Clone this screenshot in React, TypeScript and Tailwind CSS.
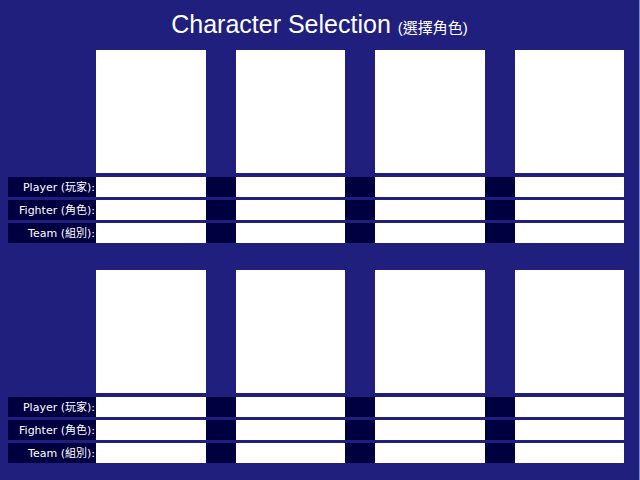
import React from 'react';

const slots = [0, 1, 2, 3];

const rows = [
  { label: 'Player', zh: '(玩家)' },
  { label: 'Fighter', zh: '(角色)' },
  { label: 'Team', zh: '(組別)' },
];

const font = { fontFamily: '"Liberation Sans", "Noto Sans CJK TC", sans-serif' };
const labelFont = { fontFamily: '"DejaVu Sans", "Noto Sans CJK TC", sans-serif' };

// one block of four character slots plus its form rows
const SelectionGroup: React.FC = () => (
  <div className="flex flex-col">
    <div className="ml-[96px] w-[528px] grid grid-cols-4 gap-x-[30px]">
      {slots.map(i => (
        <div key={i} className="h-[123px] bg-white" />
      ))}
    </div>

    <div className="mt-[4px] flex flex-col gap-[3px]">
      {rows.map(r => (
        <div key={r.label} className="ml-[8px] w-[616px] h-[20px] flex bg-[#000040]">
          <div
            className="w-[88px] shrink-0 flex items-center justify-end pt-[2px] pr-[1px] text-[11px] text-white whitespace-nowrap"
            style={labelFont}
          >
            {r.label} {r.zh}:
          </div>
          <div className="flex-1 grid grid-cols-4 gap-x-[30px]">
            {slots.map(i => (
              <div key={i} className="bg-white" />
            ))}
          </div>
        </div>
      ))}
    </div>
  </div>
);

export default function App() {
  return (
    <div
      className="w-[640px] h-[480px] overflow-hidden bg-[#201f7d] border-r border-[#7a88d6] flex flex-col"
      style={font}
    >
      {/* title */}
      <div className="h-[50px] pt-[12px] text-center text-white text-[25px] leading-[25px] whitespace-nowrap">
        Character Selection <span className="text-[15px]">(選擇角色)</span>
      </div>

      <SelectionGroup />
      <div className="h-[27px]" />
      <SelectionGroup />
    </div>
  );
}
